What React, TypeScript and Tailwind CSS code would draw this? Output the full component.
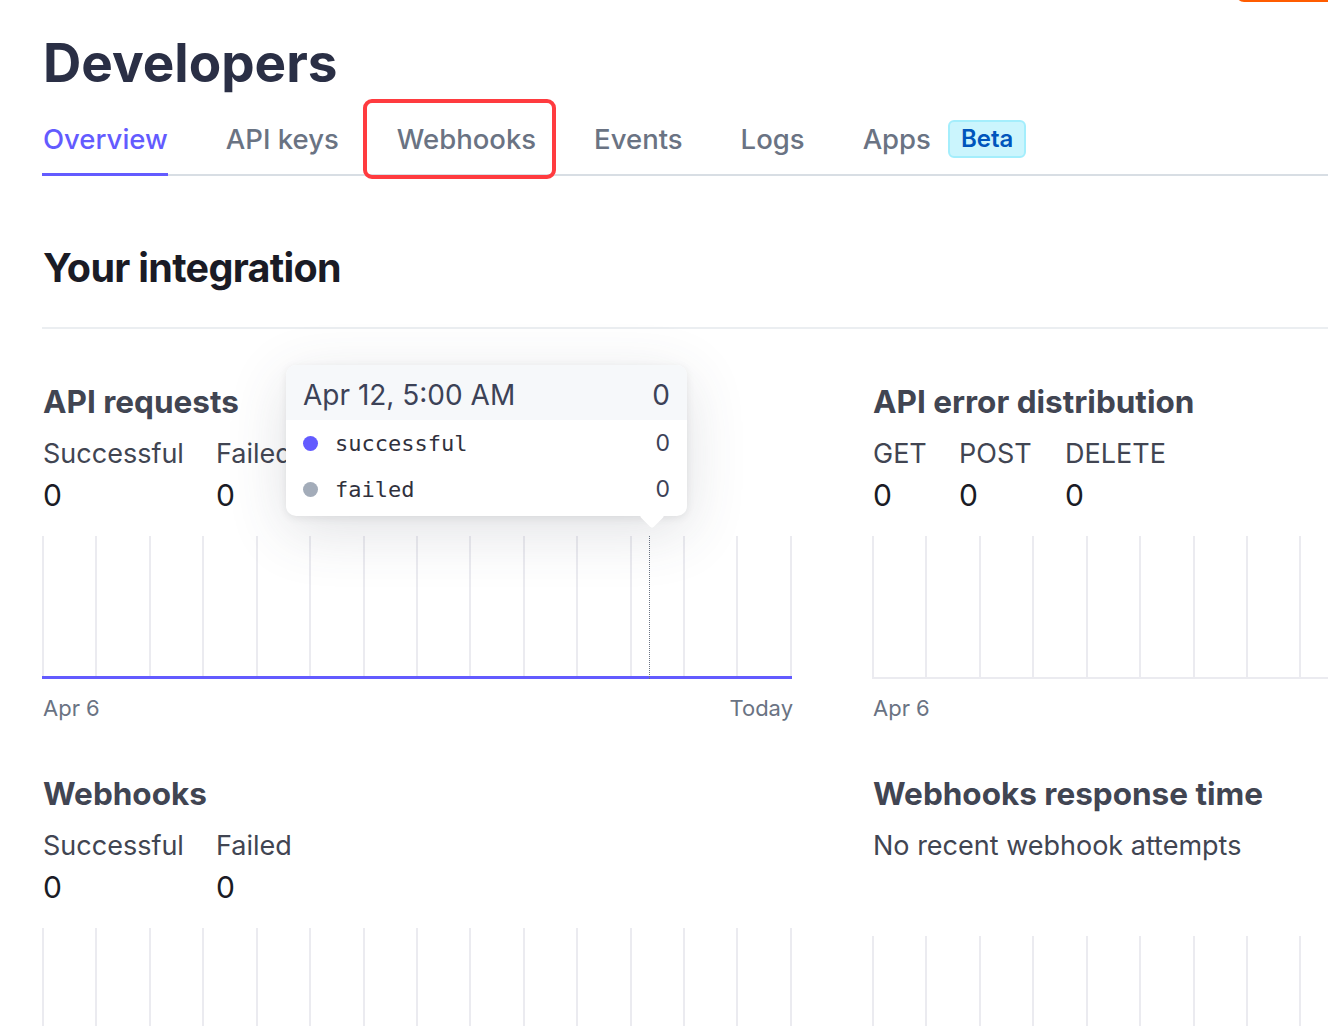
import React from 'react';

const FONT = { fontFamily: 'Inter, "Noto Sans", sans-serif' };

const tabs = ['Overview', 'API keys', 'Webhooks', 'Events', 'Logs', 'Apps'];

const GridLines: React.FC<{ height: string; base?: 'purple' | 'gray' | 'none'; marker?: boolean }> = ({
  height,
  base = 'none',
  marker = false,
}) => {
  const lines = Array.from({ length: 15 });
  return (
    <div className={`relative w-[750px] ${height}`}>
      <div className="flex h-full justify-between">
        {lines.map((_, i) => (
          <div key={i} className="h-full w-[2px] bg-[#ebebf0]" />
        ))}
      </div>
      {base === 'purple' && <div className="absolute bottom-0 left-0 h-[3px] w-full bg-[#635bff]" />}
      {base === 'gray' && <div className="absolute bottom-0 left-0 h-[2px] w-full bg-[#ebebf0]" />}
      {marker && (
        <div className="absolute top-0 bottom-0 left-[607px] border-l border-dotted border-[#6a7383]" />
      )}
    </div>
  );
};

const Stat: React.FC<{ label: string; width: string }> = ({ label, width }) => (
  <div className={width}>
    <div className="text-[27px] leading-[32px] text-[#414552]">{label}</div>
    <div className="mt-[8px] text-[30px] leading-[34px] text-[#1a1b25]">0</div>
  </div>
);

const Tooltip: React.FC = () => (
  <div className="absolute left-[243px] top-[-19px] z-10 w-[401px]">
    <div className="overflow-hidden rounded-[10px] bg-white shadow-[0_15px_60px_rgba(60,66,87,0.16),0_2px_8px_rgba(0,0,0,0.08)]">
      <div className="flex h-[55px] items-center justify-between bg-[#f6f8fa] px-[17px] pt-[4px] text-[28px] text-[#3c4257]">
        <span>Apr 12, 5:00 AM</span>
        <span>0</span>
      </div>
      <div className="px-[17px] pb-[4px]">
        {[
          { name: 'successful', color: 'bg-[#635bff]' },
          { name: 'failed', color: 'bg-[#a3acb9]' },
        ].map((r) => (
          <div key={r.name} className="flex h-[46px] items-center justify-between">
            <div className="flex items-center">
              <span className={`h-[15px] w-[15px] rounded-full ${r.color}`} />
              <span
                className="ml-[17px] text-[22px] text-[#30313d]"
                style={{ fontFamily: '"DejaVu Sans Mono", "Liberation Mono", monospace' }}
              >
                {r.name}
              </span>
            </div>
            <span className="text-[23px] text-[#3c4257]">0</span>
          </div>
        ))}
      </div>
    </div>
    <div className="absolute left-[357px] bottom-[-9px] h-[18px] w-[18px] rotate-45 rounded-[3px] bg-white" />
  </div>
);

const App: React.FC = () => {
  return (
    <div className="relative h-[1026px] w-[1328px] overflow-hidden bg-white" style={FONT}>
      {/* orange button peeking in at top right */}
      <div className="absolute right-0 top-[-30px] h-[32px] w-[92px] rounded-bl-[8px] bg-[#ff5c00]" />

      <div className="pl-[42px] pt-[33px]">
        <h1 className="pl-[1px] text-[53px] font-bold leading-[60px] text-[#2a2f45]">Developers</h1>

        {/* tabs */}
        <div className="relative mt-[30px] flex items-end border-b-2 border-[#d8dee4]">
          {tabs.map((t, i) => (
            <div
              key={t}
              className={`-mb-[2px] flex items-center pb-[18px] text-[27.5px] font-medium leading-[32px] ${
                i === 0 ? 'border-b-[3px] border-[#635bff] text-[#635bff]' : 'border-b-[3px] border-transparent text-[#6a7383]'
              } ${i === 0 ? 'pl-[1px]' : 'ml-[58px]'}`}
            >
              {t}
              {t === 'Apps' && (
                <span className="-my-[3px] ml-[17px] rounded-[6px] border-2 border-[#a4eefc] bg-[#cbf5fd] px-[11px] py-[1px] text-[24px] font-semibold leading-[32px] text-[#0055bc]">
                  Beta
                </span>
              )}
            </div>
          ))}
          {/* annotation box */}
          <div className="absolute left-[321px] top-[-24px] h-[80px] w-[193px] rounded-[9px] border-[4px] border-[#ff3b3f]" />
        </div>

        <h2 className="mt-[68px] pl-[1px] text-[39.5px] font-bold leading-[48px] tracking-[-0.7px] text-[#1a1b25]">
          Your integration
        </h2>
        <div className="mt-[35px] h-[2px] bg-[#ebeef1]" />

        <div className="mt-[55px] flex gap-[80px] pl-[1px]">
          {/* left column */}
          <div className="w-[750px] shrink-0">
            <div className="relative">
              <h3 className="text-[31.5px] font-bold leading-[36px] text-[#414552]">API requests</h3>
              <div className="mt-[18px] flex">
                <Stat label="Successful" width="w-[173px]" />
                <Stat label="Failed" width="w-[100px]" />
              </div>
              <Tooltip />
            </div>
            <div className="mt-[24px] -ml-[1px]">
              <GridLines height="h-[143px]" base="purple" marker />
            </div>
            <div className="mt-[15px] flex justify-between text-[22px] leading-[28px] text-[#6a7383]">
              <span>Apr 6</span>
              <span>Today</span>
            </div>

            <h3 className="mt-[54px] text-[31.5px] font-bold leading-[36px] text-[#414552]">Webhooks</h3>
            <div className="mt-[18px] flex">
              <Stat label="Successful" width="w-[173px]" />
              <Stat label="Failed" width="w-[100px]" />
            </div>
            <div className="mt-[24px] -ml-[1px]">
              <GridLines height="h-[120px]" />
            </div>
          </div>

          {/* right column */}
          <div className="w-[750px] shrink-0">
            <h3 className="text-[31.5px] font-bold leading-[36px] text-[#414552]">API error distribution</h3>
            <div className="mt-[18px] flex">
              <Stat label="GET" width="w-[86px]" />
              <Stat label="POST" width="w-[106px]" />
              <Stat label="DELETE" width="w-[120px]" />
            </div>
            <div className="mt-[24px] -ml-[1px]">
              <GridLines height="h-[143px]" base="gray" />
            </div>
            <div className="mt-[15px] text-[22px] leading-[28px] text-[#6a7383]">Apr 6</div>

            <h3 className="mt-[54px] text-[31.5px] font-bold leading-[36px] text-[#414552]">Webhooks response time</h3>
            <div className="mt-[18px] text-[27px] leading-[32px] text-[#414552]">No recent webhook attempts</div>
            <div className="mt-[74px] -ml-[1px]">
              <GridLines height="h-[120px]" />
            </div>
          </div>
        </div>
      </div>
    </div>
  );
};

export default App;
